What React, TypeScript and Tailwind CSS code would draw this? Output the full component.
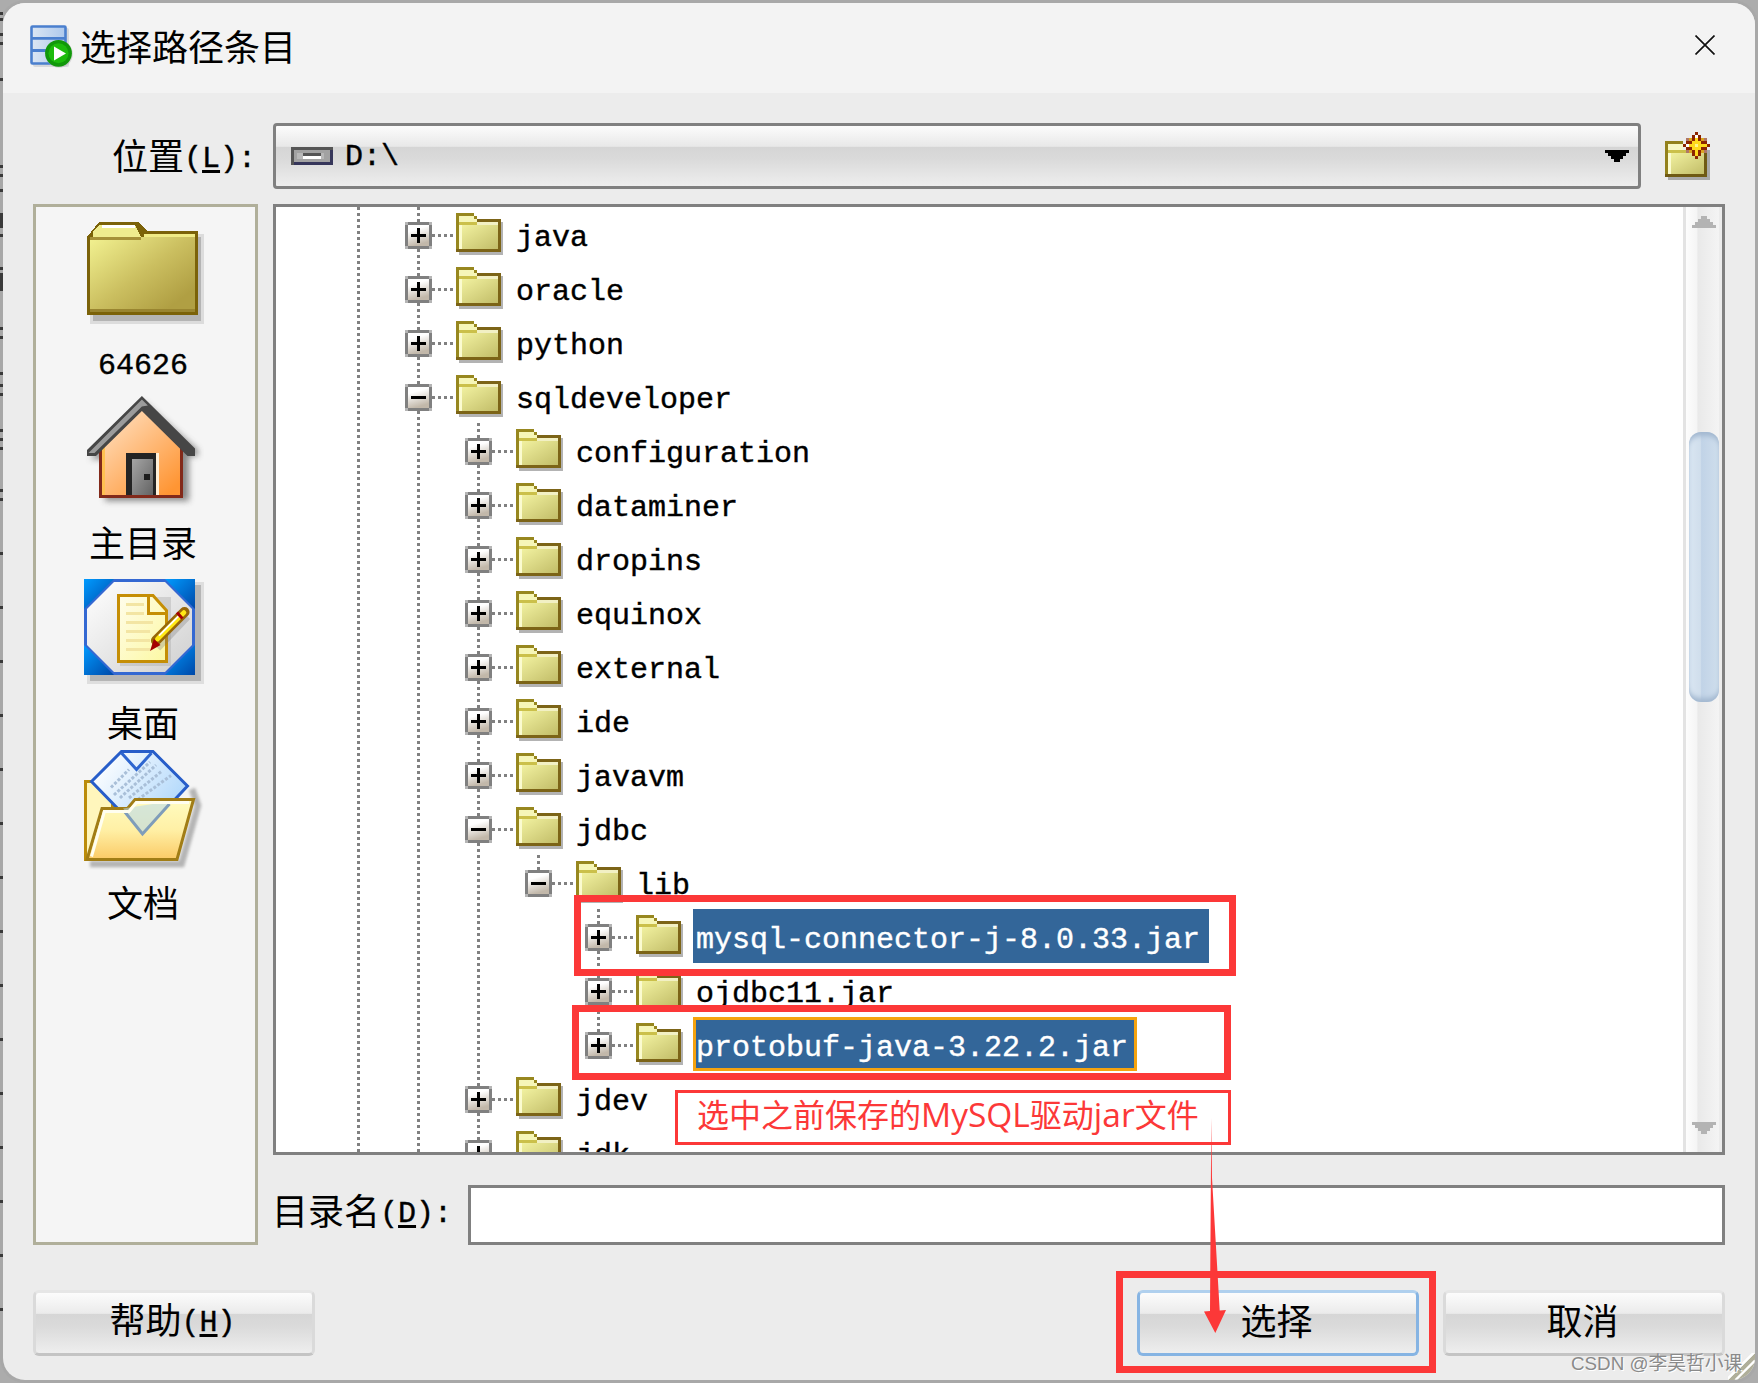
import type { ReactNode } from "react";

interface TreeRow {
  name: string;
  // one entry per ancestor level, true where its dotted line runs through the row
  guides: boolean[];
  open?: boolean;
  last?: boolean;
  selected?: boolean;
  focused?: boolean;
}

const l1 = [true];
const l2 = [true, true];
const l3 = [true, true, true];
const l4 = [true, true, true, false];

const rows: TreeRow[] = [
  { name: "java", guides: l1 },
  { name: "oracle", guides: l1 },
  { name: "python", guides: l1 },
  { name: "sqldeveloper", guides: l1, open: true },
  { name: "configuration", guides: l2 },
  { name: "dataminer", guides: l2 },
  { name: "dropins", guides: l2 },
  { name: "equinox", guides: l2 },
  { name: "external", guides: l2 },
  { name: "ide", guides: l2 },
  { name: "javavm", guides: l2 },
  { name: "jdbc", guides: l2, open: true },
  { name: "lib", guides: l3, open: true, last: true },
  { name: "mysql-connector-j-8.0.33.jar", guides: l4, selected: true },
  { name: "ojdbc11.jar", guides: l4 },
  { name: "protobuf-java-3.22.2.jar", guides: l4, last: true, selected: true, focused: true },
  { name: "jdev", guides: l2 },
  { name: "jdk", guides: l2 },
];

// dark ticks of the window behind, visible along the left edge: [top, height]
const ticks = [
  [12, 3], [18, 3], [33, 3], [42, 3], [78, 3], [165, 3], [174, 3], [189, 3], [213, 15], [234, 3], [267, 3],
  [273, 18], [327, 3], [336, 3], [372, 3], [384, 3], [393, 3], [429, 3], [438, 3], [447, 3], [489, 3], [498, 3],
  [552, 3], [606, 3], [660, 3], [714, 3], [768, 3], [822, 3], [876, 3], [930, 3], [984, 3], [1038, 3], [1092, 3],
  [1146, 3], [1200, 3], [1254, 3], [1308, 3],
];

function Mono({ children }: { children: ReactNode }) {
  return (
    <span className="align-[3px] font-['Liberation_Mono',monospace] text-[30px] leading-none [-webkit-text-stroke:0.4px]">
      {children}
    </span>
  );
}

function Mnemonic({ letter }: { letter: string }) {
  return (
    <Mono>
      (<span className="underline decoration-[3px] underline-offset-[3px]">{letter}</span>)
    </Mono>
  );
}

function AppIcon() {
  return (
    <svg width="45" height="48" viewBox="0 0 45 48">
      <defs>
        <linearGradient id="cell" x1="0" x2="1">
          <stop offset="0" stopColor="#dbe6f3" />
          <stop offset="1" stopColor="#adc8ec" />
        </linearGradient>
      </defs>
      <rect x="3" y="4" width="36" height="39" rx="2" fill="#b9bdc4" opacity="0.5" />
      <rect x="1.5" y="2.5" width="34" height="37" rx="1" fill="url(#cell)" stroke="#4a7fce" strokeWidth="2.6" />
      <path d="M1 14.3h35M1 26.5h35" stroke="#4a7fce" strokeWidth="2.8" />
      <circle cx="29" cy="30" r="13.8" fill="#a9a9a9" opacity="0.4" />
      <circle cx="28.5" cy="29.3" r="13.4" fill="#11980a" />
      <circle cx="28.5" cy="29.3" r="10" fill="#1dbb0c" />
      <path d="M24 22.5v14l12-7z" fill="#fff" />
    </svg>
  );
}

function DriveIcon() {
  return (
    <svg width="42" height="18" viewBox="0 0 14 6" shapeRendering="crispEdges">
      <rect width="14" height="6" fill="#555" />
      <path d="M1 5h12V1h1v5H1z" fill="#36365a" />
      <rect x="1" y="1" width="12" height="4" fill="#a2a2a2" />
      <rect x="2" y="2" width="9" height="2" fill="#b8b8b8" />
      <rect x="4" y="2" width="6" height="1" fill="#555" />
      <rect x="4" y="3" width="6" height="1" fill="#fff" />
    </svg>
  );
}

function NewFolderIcon() {
  return (
    <svg width="48" height="48" viewBox="0 0 16 16" shapeRendering="crispEdges">
      <rect x="1" y="6" width="14" height="10" fill="#a9a9a9" />
      <path d="M0 3h6v3h8v9H0z" fill="#93811c" />
      <path d="M13 6h1v9H0v-1h13z" fill="#6f5a14" />
      <rect x="1" y="4" width="5" height="2" fill="#f8f8c4" />
      <rect x="1" y="6" width="12" height="1" fill="#cbc04a" />
      <rect x="1" y="7" width="12" height="7" fill="url(#small)" />
      <rect x="1" y="7" width="1" height="7" fill="#fbfbd0" />
      <path d="M7 2h7v5H7z" fill="#b07766" />
      <path d="M10 0h1v1h1v1h1v1h1v1h1v1h-1v1h-1v1h-1v1h-1v1h-1V8H9V7H8V6H7V5H6V4h1V3h1V2h1V1h1z" fill="#8c2500" />
      <path d="M8 2h1v1H8zM12 2h1v1h-1zM8 6h1v1H8zM12 6h1v1h-1z" fill="#dba520" />
      <path d="M10 1h1v2h1v1h2v1h-2v1h-1v2h-1V6H9V5H7V4h2V3h1z" fill="#ffd91c" />
      <path d="M10 1h1v1h-1zM7 4h1v1H7z" fill="#fff" />
      <path d="M10 4h1v1h-1z" fill="#fff58a" />
    </svg>
  );
}

function SmallFolder() {
  return (
    <svg className="mt-[6px] shrink-0" width="48" height="42" viewBox="0 0 16 14" shapeRendering="crispEdges">
      <rect x="1" y="3" width="14.8" height="11" fill="#b3b3b3" />
      <path d="M0 0h6v1h1v1h8v11H0z" fill="#97871f" />
      <path d="M7 2h8v11H0v-1h14V3H7z" fill="#7c6417" />
      <path d="M1 1h5v1h1v1H1z" fill="#f6f6b8" />
      <rect x="7" y="3" width="7" height="1" fill="#f2f0c4" />
      <rect x="1" y="3" width="6" height="1" fill="#cbc04a" />
      <rect x="1" y="4" width="13" height="8" fill="url(#small)" />
      <path d="M1 4h1v8H1z" fill="#fbfbd0" />
    </svg>
  );
}

function ToggleBox({ open }: { open?: boolean }) {
  return (
    <svg width="27" height="27" viewBox="0 0 9 9" shapeRendering="crispEdges">
      <rect width="9" height="9" fill="#b5b5b5" />
      <path d="M1 0h7v1h1v7H8v1H1V8H0V1h1z" fill="#808080" />
      <rect x="1" y="1" width="7" height="7" fill="url(#toggle)" />
      <rect x="2" y="4" width="5" height="1" fill="#000" />
      {!open && <rect x="4" y="2" width="1" height="5" fill="#000" />}
    </svg>
  );
}

function FolderIcon() {
  return (
    <svg className="shrink-0" width="120" height="120" viewBox="0 0 40 40" shapeRendering="crispEdges">
      <defs>
        <linearGradient id="big" x1="0" y1="0" x2="1" y2="1">
          <stop offset="0.05" stopColor="#f0ef8e" />
          <stop offset="0.5" stopColor="#cbbf60" />
          <stop offset="0.85" stopColor="#b09f43" />
        </linearGradient>
      </defs>
      <path d="M2 8h38v30H2z" fill="#dcdcdc" />
      <path d="M3 9h36v28H3z" fill="#b4b4b4" />
      <path d="M1 9l4-5h13l3 3h17v28H1z" fill="#7b6209" />
      <path d="M2 9h18V8h17v26H2z" fill="url(#big)" />
      <path d="M5 5h12l2 4H3V7z" fill="#efec8e" />
      <path d="M6 5h11v1H6z" fill="#fff" />
      <rect x="2" y="9" width="17" height="1" fill="#a69138" />
      <rect x="20" y="8" width="17" height="1" fill="#f0eb86" />
      <rect x="2" y="33" width="35" height="1" fill="#998530" />
    </svg>
  );
}

function HomeIcon() {
  return (
    <svg className="shrink-0" width="120" height="120" viewBox="0 0 40 40">
      <defs>
        <linearGradient id="wall" x1="0" y1="0" x2="0.8" y2="1">
          <stop offset="0.15" stopColor="#ffdcb9" />
          <stop offset="1" stopColor="#ff9533" />
        </linearGradient>
        <linearGradient id="door" x1="0" y1="0" x2="1" y2="1">
          <stop offset="0" stopColor="#a5a5a5" />
          <stop offset="1" stopColor="#636363" />
        </linearGradient>
        <filter id="soft">
          <feGaussianBlur stdDeviation="1" />
        </filter>
      </defs>
      <path d="M20 4L38 20v2h-3v15H7V23H2z" fill="#777" opacity="0.85" filter="url(#soft)" />
      <path d="M5.5 19L19 5l13.5 14v16.5h-27z" fill="url(#wall)" />
      <path d="M5.5 19v16.5h27V19" fill="none" stroke="#82291a" />
      <rect x="6" y="19" width="1" height="16" fill="#ffc050" />
      <path d="M1 20L19.3 2 37 19.5V22h-2.5L19.3 7 4 22H1z" fill="#464646" />
      <path d="M1.5 21L19.3 3.2l2 2-2 .3L3.5 21z" fill="#9b9b9b" />
      <rect x="14" y="21" width="10" height="14" fill="#242424" />
      <rect x="24" y="21" width="1" height="14" fill="#fff0d8" />
      <rect x="16" y="23" width="7" height="12" fill="url(#door)" />
      <rect x="20" y="28" width="2" height="2" fill="#1d1d1d" />
    </svg>
  );
}

function DesktopIcon() {
  return (
    <svg className="shrink-0" width="120" height="120" viewBox="0 0 40 40">
      <defs>
        <linearGradient id="corner" x1="0" y1="0" x2="1" y2="1">
          <stop offset="0" stopColor="#009bff" />
          <stop offset="1" stopColor="#0048a8" />
        </linearGradient>
        <linearGradient id="plate" x1="0" y1="0" x2="1" y2="1">
          <stop offset="0" stopColor="#fff" />
          <stop offset="1" stopColor="#cfcfcf" />
        </linearGradient>
        <linearGradient id="page" x1="0" y1="0" x2="1" y2="1">
          <stop offset="0" stopColor="#fffdec" />
          <stop offset="1" stopColor="#fcf8a2" />
        </linearGradient>
      </defs>
      <rect x="1" y="4" width="39" height="34" fill="#dedede" />
      <rect x="2" y="5" width="37" height="32" fill="#b5b5b5" />
      <rect y="3" width="37" height="32" fill="#3468d2" />
      <path d="M0 3h10L0 13z" fill="url(#corner)" />
      <path d="M27 3h10v10z" fill="url(#corner)" />
      <path d="M0 25v10h10z" fill="url(#corner)" />
      <path d="M37 25v10H27z" fill="url(#corner)" />
      <path d="M10 4h17l9 9v12l-9 9H10l-9-9V13z" fill="url(#plate)" />
      <path d="M12 9h17v23H12z" fill="#aaa" opacity="0.4" />
      <path d="M11.5 8.5H23l4.5 5v17h-16z" fill="url(#page)" stroke="#c58e05" />
      <path d="M21.5 8.5v6h6" fill="none" stroke="#c58e05" />
      <path d="M14 11.5h6M14 14.5h6M14 17.5h9M14 20.5h8M14 23.5h8M14 26.5h8" stroke="#f3e5a3" />
      <path d="M24.5 26l10-10.5" stroke="#777" strokeWidth="2.5" opacity="0.3" />
      <path d="M24 23.5L33.5 14" stroke="#976709" strokeWidth="3.4" strokeLinecap="round" />
      <path d="M24.5 23l8.8-8.8" stroke="#ffe814" strokeWidth="1.6" strokeLinecap="round" />
      <path d="M25 21.9l7-7" stroke="#fff" strokeWidth="0.6" />
      <path d="M22 27l1.3-4 2.2 2z" fill="#a50000" />
      <path d="M31 14.2l1.8 2" stroke="#a50000" />
    </svg>
  );
}

function DocumentsIcon() {
  return (
    <svg className="shrink-0" width="120" height="120" viewBox="0 0 40 40">
      <defs>
        <linearGradient id="paper" x1="0" y1="0" x2="1" y2="0.6">
          <stop offset="0.1" stopColor="#fff" />
          <stop offset="1" stopColor="#add6fb" />
        </linearGradient>
        <linearGradient id="pocket" x1="0" y1="0" x2="0" y2="1">
          <stop offset="0" stopColor="#fffcc0" />
          <stop offset="0.5" stopColor="#fff0a6" />
          <stop offset="1" stopColor="#fbca66" />
        </linearGradient>
        <filter id="softer">
          <feGaussianBlur stdDeviation="0.6" />
        </filter>
      </defs>
      <path d="M2 38h30.5L38 18.5 36 13" fill="none" stroke="#999" strokeWidth="2.2" opacity="0.7" filter="url(#softer)" />
      <path d="M.5 36.5v-26h3l6 6v20z" fill="#fff6bc" stroke="#bb8c0a" />
      <path d="M2.5 10.5l10-10H23L34.5 12l-15 16z" fill="url(#paper)" stroke="#275dc9" />
      <path d="M12.5 1l5 5.5 5-5.5" fill="none" stroke="#2e66d0" />
      <path
        d="M9 12.5l6-6M10 15L22 4M12 16L24 5M15 16L26 7M18 16.5l11-8"
        stroke="#a9bfd8"
        strokeDasharray="1 0.6"
      />
      <path d="M1 36.5l5-17h8.5l2.5-3h19.5l-5.5 20z" fill="url(#pocket)" stroke="#a17d16" />
      <path d="M13 19.5l7 8.500 9.500-11" fill="#b4d7ef" opacity="0.55" />
      <path d="M13.5 20.5l6 7.500 9-10" fill="none" stroke="#7f9dba" />
      <path d="M2.5 35.5l4.300-15H15l2.500-3H35" fill="none" stroke="#fffef0" />
    </svg>
  );
}

const places = [
  { label: "64626", icon: <FolderIcon />, mono: true },
  { label: "主目录", icon: <HomeIcon /> },
  { label: "桌面", icon: <DesktopIcon /> },
  { label: "文档", icon: <DocumentsIcon /> },
];

function Row({ row }: { row: TreeRow }) {
  // the innermost level's own line is drawn by the toggle column
  return (
    <div className="flex h-[54px] shrink-0 pl-[69px]">
      {row.guides.map((visible, i) => (
        <div key={i} className="w-[60px] shrink-0 pl-[12px]">
          {visible && (
            <div className="h-full w-[3px] bg-[repeating-linear-gradient(to_bottom,#808080_0_3px,transparent_3px_6px)]" />
          )}
        </div>
      ))}
      <div className="flex w-[27px] shrink-0 flex-col items-center">
        <div className="h-[15px] w-[3px] bg-[repeating-linear-gradient(to_bottom,#808080_0_3px,transparent_3px_6px)]" />
        <ToggleBox open={row.open} />
        {!row.last && (
          <div className="h-[12px] w-[3px] bg-[repeating-linear-gradient(to_bottom,#808080_0_3px,transparent_3px_6px)]" />
        )}
      </div>
      <div className="mt-[27px] mr-[3px] h-[3px] w-[21px] shrink-0 bg-[repeating-linear-gradient(to_right,#808080_0_3px,transparent_3px_6px)]" />
      <SmallFolder />
      <div
        className={`ml-[9px] h-[54px] pr-[9px] pl-[3px] font-['Liberation_Mono',monospace] text-[30px] leading-[62px] whitespace-pre [-webkit-text-stroke:0.4px] ${
          row.selected ? "bg-[#336699] text-white" : "text-black"
        } ${row.focused ? "shadow-[inset_0_0_0_3px_#f5a30f]" : ""}`}
      >
        {row.name}
      </div>
    </div>
  );
}

function Button({ children, primary }: { children: ReactNode; primary?: boolean }) {
  return (
    <button
      className={`flex h-[66px] w-[282px] items-center justify-center rounded-[6px] border-[3px] bg-[linear-gradient(to_bottom,#fcfcfc,#ebebeb_34%,#d6d6d6_35%,#dadada_55%,#eeeeee)] pr-[3px] pb-[9px] text-[36px] leading-none ${
        primary ? "border-[#86b4e3] border-t-[#b0d0ee]" : "border-[#dadada] border-t-[#e6e6e6] border-b-[#c4c4c4]"
      }`}
    >
      <span>{children}</span>
    </button>
  );
}

function Annotations() {
  return (
    <>
      <div className="absolute top-[895px] left-[574px] h-[81px] w-[662px] border-[7px] border-[#fc3838]" />
      <div className="absolute top-[1005px] left-[572px] h-[75px] w-[659px] border-[7px] border-[#fc3838]" />
      <div className="absolute top-[1090px] left-[675px] h-[55px] w-[556px] border-[3px] border-[#fc3838] pl-[19px] text-[32px] leading-[41px] whitespace-nowrap text-[#fc3838]">
        选中之前保存的<span className="font-['Open_Sans','Noto_Sans',sans-serif] text-[33.5px]">MySQL</span>驱动
        <span className="font-['Open_Sans','Noto_Sans',sans-serif] text-[33.5px]">jar</span>文件
      </div>
      <div className="absolute top-[1271px] left-[1116px] h-[102px] w-[320px] border-[7px] border-[#fc3838]" />
      <svg className="absolute top-[1118px] left-[1200px]" width="30" height="216" viewBox="0 0 30 216">
        <path d="M11.3 0L10 193l-6 .5L15.3 215 26 192l-6.3.5L12 60z" fill="#fc3838" />
      </svg>
    </>
  );
}

export default function App() {
  return (
    <div className="relative h-[1383px] w-[1758px] overflow-hidden bg-[#acacac] p-[3px] font-['Noto_Sans_CJK_SC',sans-serif] text-black">
      <svg width="0" height="0" className="absolute">
        <defs>
          <linearGradient id="small" x1="0" y1="0" x2="1" y2="1">
            <stop offset="0" stopColor="#f3f3a2" />
            <stop offset="1" stopColor="#c2bd68" />
          </linearGradient>
          <linearGradient id="toggle" x1="0" y1="0" x2="0.3" y2="1">
            <stop offset="0.3" stopColor="#fff" />
            <stop offset="1" stopColor="#c2b8aa" />
          </linearGradient>
        </defs>
      </svg>

      <div className="relative flex h-[1377px] w-[1752px] flex-col overflow-hidden rounded-[22px] bg-[#ececec] shadow-[0_0_0_3px_#a8a8a8]">
        <header className="flex h-[90px] shrink-0 items-start justify-between bg-[#f3f3f3] pr-[40px] pl-[27px]">
          <div className="flex">
            <div className="mt-[21px]">
              <AppIcon />
            </div>
            <h1 className="mt-[15px] ml-[5px] text-[36px] leading-[54px]">选择路径条目</h1>
          </div>
          <svg className="mt-[32px]" width="20" height="20" viewBox="0 0 20 20" stroke="#111" strokeWidth="1.7">
            <path d="M.5.5l19 19M19.5.5l-19 19" />
          </svg>
        </header>

        <main className="flex flex-col px-[30px] pt-[30px]">
          <div className="flex h-[66px] items-center">
            <label className="w-[240px] pb-[5px] pl-[79px] text-[36px] leading-[54px] whitespace-nowrap">
              位置
              <Mnemonic letter="L" />
              <Mono>:</Mono>
            </label>
            <div className="flex h-[66px] w-[1368px] items-center justify-between rounded-[4px] border-[3px] border-[#808080] bg-[linear-gradient(to_bottom,#fcfcfc,#e8e8e8_34%,#d5d5d5_35%,#dadada_55%,#eeeeee)] pr-[9px] pl-[15px]">
              <div className="flex items-center gap-[12px]">
                <DriveIcon />
                <div className="pt-[2px] font-['Liberation_Mono',monospace] text-[30px] leading-none [-webkit-text-stroke:0.4px]">
                  D:\
                </div>
              </div>
              <svg width="24" height="12" viewBox="0 0 8 4" shapeRendering="crispEdges">
                <path d="M0 0h8v1H7v1H6v1H5v1H3V3H2V2H1V1H0z" />
              </svg>
            </div>
            <div className="ml-[24px]">
              <NewFolderIcon />
            </div>
          </div>

          <div className="mt-[15px] flex gap-[15px]">
            <nav className="flex h-[1041px] w-[225px] shrink-0 flex-col items-center border-[3px] border-[#b0af9a] bg-[#f5f5f5] pt-[3px] pr-[3px]">
              {places.map((place) => (
                <div key={place.label} className="flex h-[180px] flex-col items-center">
                  {place.icon}
                  <div className="mt-[4px] h-[54px] pr-[2px] text-[36px] leading-[54px]">
                    {place.mono ? <Mono>{place.label}</Mono> : place.label}
                  </div>
                </div>
              ))}
            </nav>

            <div className="flex w-[1452px] flex-col gap-[30px]">
              <div className="flex h-[951px] border-[3px] border-[#808080] bg-white">
                <div className="flex h-[945px] w-[1407px] flex-col overflow-hidden">
                  {rows.map((row) => (
                    <Row key={row.name} row={row} />
                  ))}
                </div>
                <div className="flex w-[39px] flex-col items-center border-r-[3px] border-l-[3px] border-r-[#ececec] border-l-[#e3e3e3] bg-[linear-gradient(to_right,#fdfdfd,#f5f5f5_33%,#e9e9e9_36%,#f4f4f4)] pt-[9px] pl-[3px]">
                  <svg width="24" height="12" viewBox="0 0 8 4" shapeRendering="crispEdges" fill="#b3b3b3">
                    <path d="M3 0h2v1h1v1h1v1h1v1H0V3h1V2h1V1h1z" />
                  </svg>
                  <div className="mt-[204px] h-[270px] w-[30px] rounded-[12px] bg-[linear-gradient(to_right,#dae6f2,#d0deec_38%,#c1d3e7_42%,#cfdeec)] shadow-[inset_0_6px_5px_-2px_#a3b8d0,inset_0_-6px_5px_-2px_#a3b8d0]" />
                  <svg className="mt-[420px]" width="24" height="12" viewBox="0 0 8 4" shapeRendering="crispEdges" fill="#b3b3b3">
                    <path d="M0 0h8v1H7v1H6v1H5v1H3V3H2V2H1V1H0z" />
                  </svg>
                </div>
              </div>
              <div className="flex h-[60px]">
                <label className="-mt-[3px] -ml-[1px] w-[196px] shrink-0 text-[36px] leading-[54px] whitespace-nowrap">
                  目录名
                  <Mnemonic letter="D" />
                  <Mono>:</Mono>
                </label>
                <div className="h-[60px] w-[1257px] border-[3px] border-[#808080] bg-white" />
              </div>
            </div>
          </div>

          <footer className="mt-[45px] flex w-[1692px] justify-between">
            <Button>
              帮助
              <Mnemonic letter="H" />
            </Button>
            <div className="flex gap-[24px]">
              <Button primary>选择</Button>
              <Button>取消</Button>
            </div>
          </footer>
        </main>

        <svg className="absolute right-0 bottom-0" width="27" height="27" viewBox="0 0 9 9">
          <path d="M0 9L9 0v9z" fill="#b0af9a" />
          <path d="M-.5 9L9-.5M2.5 9L9 2.5M5.5 9L9 5.5" stroke="#fff" strokeWidth="0.8" />
        </svg>
      </div>

      {ticks.map(([top, height]) => (
        <div key={top} className="absolute left-0 w-[3px] bg-[#3a3a3a]" style={{ top, height }} />
      ))}

      <Annotations />
      <div className="absolute top-[1351px] left-[1571px] font-['Liberation_Sans','Noto_Sans_CJK_SC',sans-serif] text-[18.8px] leading-[26px] whitespace-nowrap text-[#8a8a8a] [text-shadow:1px_1px_0_#fff]">
        CSDN @李昊哲小课
      </div>
    </div>
  );
}
